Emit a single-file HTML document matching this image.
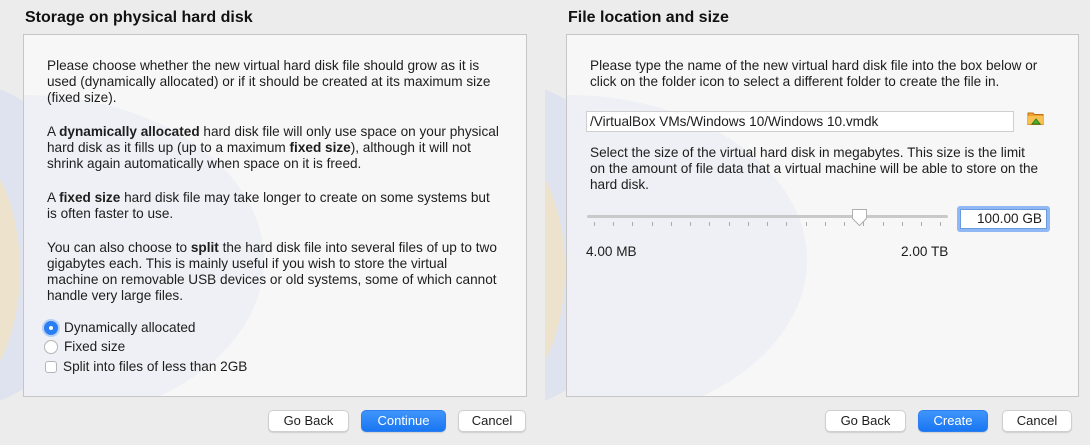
<!DOCTYPE html>
<html><head><meta charset="utf-8"><style>
*{box-sizing:border-box;margin:0;padding:0}
body{width:1090px;height:445px;background:#ececec;font-family:"Liberation Sans",sans-serif;font-size:13.6px;color:#1d1d1d;position:relative;overflow:hidden}
.a{position:absolute}
h1{position:absolute;font-size:16px;font-weight:bold;top:9px;color:#111}
.box{position:absolute;top:34px;height:363px;border:1px solid #c6c6c6;background:#f7f7f7;overflow:hidden}
.blob{position:absolute;border-radius:50%;}
p{position:absolute;line-height:16px;white-space:nowrap}
.btn{position:absolute;top:410px;height:22px;border-radius:5px;background:#fff;border:1px solid #cfcfcf;box-shadow:0 1px 1px rgba(0,0,0,.12);text-align:center;line-height:20px;font-size:13px}
.btn.p{background:linear-gradient(#3f95fb,#1a76f2);color:#fff;border-color:#2c7ff0}
.tick{position:absolute;top:222px;width:1px;height:4px;background:#aaa}
.clip{position:absolute;top:0;width:545px;height:445px;overflow:hidden}
</style></head><body>
<div class="clip" style="left:0">
<div class="blob" style="left:-200px;top:80px;width:300px;height:330px;background:#dfe3ef"></div>
<div class="blob" style="left:-120px;top:140px;width:140px;height:260px;background:#ede3cc"></div>
</div>
<div class="clip" style="left:545px">
<div class="blob" style="left:-200px;top:80px;width:300px;height:330px;background:#dfe3ef"></div>
<div class="blob" style="left:-120px;top:140px;width:140px;height:260px;background:#ede3cc"></div>
</div>

<h1 style="left:25px">Storage on physical hard disk</h1>
<div class="box" style="left:23px;width:504px">
<div class="blob" style="left:-240px;top:60px;width:480px;height:330px;background:rgba(232,235,244,.6)"></div>
</div>
<p style="left:47px;top:58px">Please choose whether the new virtual hard disk file should grow as it is<br>used (dynamically allocated) or if it should be created at its maximum size<br>(fixed size).</p>
<p style="left:47px;top:124px">A <b>dynamically allocated</b> hard disk file will only use space on your physical<br>hard disk as it fills up (up to a maximum <b>fixed size</b>), although it will not<br>shrink again automatically when space on it is freed.</p>
<p style="left:47px;top:190px">A <b>fixed size</b> hard disk file may take longer to create on some systems but<br>is often faster to use.</p>
<p style="left:47px;top:240px">You can also choose to <b>split</b> the hard disk file into several files of up to two<br>gigabytes each. This is mainly useful if you wish to store the virtual<br>machine on removable USB devices or old systems, some of which cannot<br>handle very large files.</p>
<div class="a" style="left:44px;top:321px;width:14px;height:14px;border-radius:50%;background:#2a7ef3;box-shadow:0 0 0 2px rgba(80,150,250,.35)"><div class="a" style="left:5px;top:5px;width:4px;height:4px;border-radius:50%;background:#fff"></div></div>
<p style="left:64px;top:320px">Dynamically allocated</p>
<div class="a" style="left:44px;top:340px;width:14px;height:14px;border-radius:50%;background:#fff;border:1px solid #b5b5b5"></div>
<p style="left:64px;top:339px">Fixed size</p>
<div class="a" style="left:45px;top:361px;width:12px;height:12px;border-radius:3px;background:#fff;border:1px solid #b5b5b5"></div>
<p style="left:63px;top:359px">Split into files of less than 2GB</p>
<div class="btn" style="left:268px;width:81px">Go Back</div>
<div class="btn p" style="left:361px;width:85px">Continue</div>
<div class="btn" style="left:458px;width:68px">Cancel</div>

<h1 style="left:568px">File location and size</h1>
<div class="box" style="left:566px;width:513px">
<div class="blob" style="left:-240px;top:60px;width:480px;height:330px;background:rgba(232,235,244,.6)"></div>
</div>
<p style="left:590px;top:58px">Please type the name of the new virtual hard disk file into the box below or<br>click on the folder icon to select a different folder to create the file in.</p>
<div class="a" style="left:586px;top:111px;width:428px;height:21px;background:#fff;border:1px solid #cfcfcf;padding-left:3px;line-height:19px;font-size:13.6px">/VirtualBox VMs/Windows 10/Windows 10.vmdk</div>
<svg class="a" style="left:1027px;top:110px" width="18" height="16" viewBox="0 0 18 16"><path d="M1 3h5l1.5 1.5H16v10H1z" fill="#f0a030" stroke="#c07010"/><path d="M1 6h15v8.5H1z" fill="#f8c050"/><path d="M5 14l4-5 4 5z" fill="#4cb030" stroke="#2a8018"/></svg>
<p style="left:590px;top:145px">Select the size of the virtual hard disk in megabytes. This size is the limit<br>on the amount of file data that a virtual machine will be able to store on the<br>hard disk.</p>
<div class="a" style="left:587px;top:215px;width:361px;height:3px;border-radius:2px;background:#c9c9c9"></div>
<svg class="a" style="left:851px;top:208px" width="17" height="19" viewBox="0 0 17 19"><path d="M1.5 1.5h14v9l-7 7-7-7z" fill="#fff" stroke="#b0b0b0"/></svg>
<div class="tick" style="left:594px"></div><div class="tick" style="left:613px"></div><div class="tick" style="left:632px"></div><div class="tick" style="left:652px"></div><div class="tick" style="left:671px"></div><div class="tick" style="left:690px"></div><div class="tick" style="left:709px"></div><div class="tick" style="left:729px"></div><div class="tick" style="left:748px"></div><div class="tick" style="left:767px"></div><div class="tick" style="left:786px"></div><div class="tick" style="left:806px"></div><div class="tick" style="left:825px"></div><div class="tick" style="left:844px"></div><div class="tick" style="left:863px"></div><div class="tick" style="left:883px"></div><div class="tick" style="left:902px"></div><div class="tick" style="left:921px"></div><div class="tick" style="left:940px"></div>
<div class="a" style="left:957px;top:206px;width:93px;height:26px;border:3px solid #8fb8f5;border-radius:3px;background:#fff;text-align:right;padding-right:5px;line-height:19px;font-size:13.6px;box-shadow:inset 0 0 0 1px #6a9ae0">100.00 GB</div>
<p style="left:586px;top:244px">4.00 MB</p>
<p style="left:901px;top:244px">2.00 TB</p>
<div class="btn" style="left:825px;width:81px">Go Back</div>
<div class="btn p" style="left:918px;width:70px">Create</div>
<div class="btn" style="left:1002px;width:70px">Cancel</div>
</body></html>
